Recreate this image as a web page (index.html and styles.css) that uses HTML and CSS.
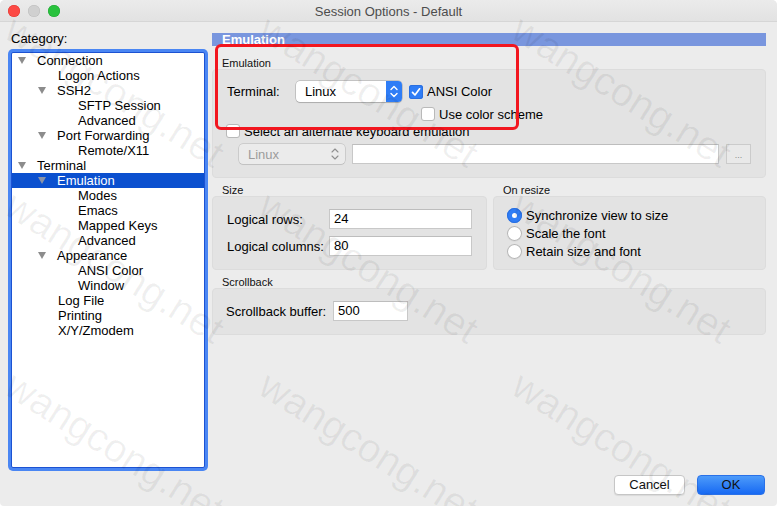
FILE: index.html
```html
<!DOCTYPE html>
<html lang="en">
<head>
<meta charset="utf-8">
<title>Session Options - Default</title>
<link rel="stylesheet" href="styles.css">
</head>
<body>
<div class="window">
  <header class="titlebar">
    <div class="lights">
      <span class="light red"></span>
      <span class="light gray"></span>
      <span class="light green"></span>
    </div>
    <div class="title">Session Options - Default</div>
    <div></div>
  </header>

  <div class="content">
    <aside class="sidebar">
      <div class="cat-label">Category:</div>
      <ul class="tree">
        <li class="l0"><span class="caret"></span>Connection</li>
        <li class="l1">Logon Actions</li>
        <li class="l1"><span class="caret"></span>SSH2</li>
        <li class="l2">SFTP Session</li>
        <li class="l2">Advanced</li>
        <li class="l1"><span class="caret"></span>Port Forwarding</li>
        <li class="l2">Remote/X11</li>
        <li class="l0"><span class="caret"></span>Terminal</li>
        <li class="l1 selected"><span class="caret"></span>Emulation</li>
        <li class="l2">Modes</li>
        <li class="l2">Emacs</li>
        <li class="l2">Mapped Keys</li>
        <li class="l2">Advanced</li>
        <li class="l1"><span class="caret"></span>Appearance</li>
        <li class="l2">ANSI Color</li>
        <li class="l2">Window</li>
        <li class="l1">Log File</li>
        <li class="l1">Printing</li>
        <li class="l1">X/Y/Zmodem</li>
      </ul>
    </aside>

    <main class="panel">
      <div class="panel-head">Emulation</div>

      <div class="group-label first">Emulation</div>
      <div class="group-box emu">
        <div class="row term-row">
          <span class="field-label term-label">Terminal:</span>
          <div class="select">
            <span class="select-text">Linux</span>
            <span class="stepper">
              <svg width="16" height="21" viewBox="0 0 16 21"><path d="M5 8.5 L8 5.5 L11 8.5 M5 12.5 L8 15.5 L11 12.5" fill="none" stroke="#fff" stroke-width="1.4" stroke-linecap="round" stroke-linejoin="round"/></svg>
            </span>
          </div>
          <span class="check on"><svg width="14" height="14" viewBox="0 0 14 14"><path d="M3.5 7.3 L6 10 L10.6 3.8" fill="none" stroke="#fff" stroke-width="1.7" stroke-linecap="round" stroke-linejoin="round"/></svg></span>
          <span class="check-text">ANSI Color</span>
        </div>
        <div class="row scheme-row">
          <span class="check"></span>
          <span class="check-text">Use color scheme</span>
        </div>
        <div class="row alt-row">
          <span class="check"></span>
          <span class="check-text">Select an alternate keyboard emulation</span>
        </div>
        <div class="row keymap-row">
          <div class="select disabled">
            <span class="select-text">Linux</span>
            <span class="stepper">
              <svg width="16" height="20" viewBox="0 0 16 20"><path d="M5 8 L8 5 L11 8 M5 12 L8 15 L11 12" fill="none" stroke="#8f8f8f" stroke-width="1.1" stroke-linecap="round" stroke-linejoin="round"/></svg>
            </span>
          </div>
          <div class="input wide"></div>
          <div class="browse">...</div>
        </div>
      </div>

      <div class="pair">
        <section class="half">
          <div class="group-label">Size</div>
          <div class="group-box size-box">
            <div class="row field-row">
              <span class="field-label size-label">Logical rows:</span>
              <div class="input size-input">24</div>
            </div>
            <div class="row field-row">
              <span class="field-label size-label">Logical columns:</span>
              <div class="input size-input">80</div>
            </div>
          </div>
        </section>
        <section class="half">
          <div class="group-label">On resize</div>
          <div class="group-box resize-box">
            <div class="row radio-row"><span class="radio on"></span>Synchronize view to size</div>
            <div class="row radio-row"><span class="radio"></span>Scale the font</div>
            <div class="row radio-row"><span class="radio"></span>Retain size and font</div>
          </div>
        </section>
      </div>

      <div class="group-label">Scrollback</div>
      <div class="group-box scroll-box">
        <div class="row field-row">
          <span class="field-label scroll-label">Scrollback buffer:</span>
          <div class="input scroll-input">500</div>
        </div>
      </div>
    </main>
  </div>

  <footer class="footer">
    <button class="btn cancel">Cancel</button>
    <button class="btn ok">OK</button>
  </footer>

  <div class="callout"></div>

  <div class="watermarks">
    <span class="wm c1 r1">wangcong.net</span>
    <span class="wm c2 r1">wangcong.net</span>
    <span class="wm c3 r1">wangcong.net</span>
    <span class="wm c1 r2">wangcong.net</span>
    <span class="wm c2 r2">wangcong.net</span>
    <span class="wm c3 r2">wangcong.net</span>
    <span class="wm c1 r3">wangcong.net</span>
    <span class="wm c2 r3">wangcong.net</span>
    <span class="wm c3 r3">wangcong.net</span>
  </div>
</div>
</body>
</html>
```

FILE: styles.css
```css
* { box-sizing: border-box; }

html, body {
  margin: 0;
  padding: 0;
}

body {
  width: 777px;
  height: 506px;
  background: #ffffff;
  font-family: "Liberation Sans", Arial, Helvetica, sans-serif;
  font-size: 13px;
  color: #000;
  overflow: hidden;
}

.window {
  position: relative;
  width: 777px;
  height: 506px;
  background: #ececec;
  border-radius: 5px 5px 4px 4px;
  display: flex;
  flex-direction: column;
  overflow: hidden;
}

/* ---- title bar ---- */
.titlebar {
  height: 22px;
  flex: none;
  display: grid;
  grid-template-columns: 1fr auto 1fr;
  align-items: center;
  background: linear-gradient(#ebebeb, #e2e2e2);
  border-bottom: 1px solid #d6d6d6;
}

.lights {
  display: flex;
  gap: 8px;
  padding-left: 8px;
  padding-top: 1px;
}

.light {
  width: 12px;
  height: 12px;
  border-radius: 50%;
}

.light.red { background: #fc4a45; box-shadow: inset 0 0 0 0.5px #e0352f; }
.light.gray { background: #d0d0d0; box-shadow: inset 0 0 0 0.5px #bcbcbc; }
.light.green { background: #29c23e; box-shadow: inset 0 0 0 0.5px #1fa531; }

.title {
  font-size: 13px;
  color: #4d4d4d;
  padding-top: 1px;
}

/* ---- main area ---- */
.content {
  flex: 1;
  display: flex;
  gap: 7px;
  padding: 9px 11px 0 11px;
  min-height: 0;
}

.sidebar {
  width: 194px;
  flex: none;
}

.cat-label {
  line-height: 16px;
  height: 16px;
}

.tree {
  list-style: none;
  margin: 5px 0 0;
  padding: 0;
  height: 416px;
  background: #fff;
  border: 1px solid #1c52d2;
  border-radius: 2px;
  box-shadow: 0 0 0 3px #4a86f3;
}

.tree li {
  height: 15px;
  line-height: 15px;
  display: flex;
  align-items: center;
  white-space: nowrap;
}

.tree .l0 { padding-left: 26px; }
.tree .l1 { padding-left: 46px; }
.tree .l2 { padding-left: 66px; }

.caret {
  width: 0;
  height: 0;
  margin-left: -20px;
  margin-right: 11px;
  border-left: 4.5px solid transparent;
  border-right: 4.5px solid transparent;
  border-top: 7px solid #8c8c8c;
}

.tree li.selected {
  background: #0b50cf;
  color: #fff;
}

.tree li.selected .caret { border-top-color: #8a93a8; }

/* ---- right panel ---- */
.panel {
  flex: 1;
  margin-top: 2px;
}

.panel-head {
  height: 13px;
  line-height: 13px;
  background: #7996de;
  color: #fff;
  font-weight: bold;
  padding-left: 10px;
}

.group-label {
  font-size: 11px;
  line-height: 12px;
  height: 12px;
  margin-top: 6px;
  padding-left: 10px;
  color: #111;
}

.group-label.first { margin-top: 11px; }

.group-box {
  background: #e3e3e3;
  border: 1px solid #dcdcdc;
  border-radius: 4px;
  padding: 0 14px 0 13px;
}

.row {
  display: flex;
  align-items: center;
}

.field-label { flex: none; }

/* emulation group */
.emu {
  height: 109px;
  padding-top: 11px;
}

.term-row { height: 21px; }
.term-label { width: 70px; padding-left: 1px; }

.scheme-row {
  height: 18px;
  margin-top: 3px;
  padding-left: 195px;
}

.alt-row { height: 16px; }

.keymap-row {
  height: 20px;
  margin-top: 5px;
  padding-left: 13px;
  gap: 7px;
}

.select {
  position: relative;
  width: 106px;
  height: 21px;
  flex: none;
  margin-right: 7px;
  background: #fff;
  border-radius: 4px;
  box-shadow: 0 0 0 0.5px rgba(0, 0, 0, 0.28), 0 1px 1px rgba(0, 0, 0, 0.12);
  display: flex;
  align-items: center;
}

.select-text {
  flex: 1;
  padding-left: 9px;
}

.stepper {
  width: 16px;
  height: 100%;
  background: #2f7df6;
  border-radius: 0 4px 4px 0;
  display: flex;
}

.select.disabled {
  height: 20px;
  margin-right: 0;
  background: #ebebeb;
  box-shadow: 0 0 0 0.5px rgba(0, 0, 0, 0.2), 0 1px 1px rgba(0, 0, 0, 0.06);
  color: #9c9c9c;
}

.select.disabled .stepper {
  background: transparent;
  margin-right: 2px;
}

.check {
  width: 14px;
  height: 14px;
  flex: none;
  border-radius: 3px;
  background: #fff;
  box-shadow: inset 0 0 0 1px #b9b9b9;
  margin-right: 4px;
  display: flex;
}

.check.on {
  background: #2f7df6;
  box-shadow: inset 0 0 0 1px #2a6fe0;
}

.input {
  height: 20px;
  background: #fff;
  border: 1px solid #c8c8c8;
  border-top-color: #bdbdbd;
  line-height: 18px;
  padding-left: 4px;
}

.input.wide { flex: 1; }

.browse {
  width: 25px;
  height: 20px;
  flex: none;
  background: #e9e9e9;
  border: 1px solid #cbcbcb;
  color: #8a8a8a;
  font-size: 9px;
  text-align: center;
  line-height: 20px;
}

/* size / on resize */
.pair {
  display: flex;
  gap: 6px;
}

.half { flex: 1; }

.size-box {
  height: 74px;
  padding-top: 12px;
}

.field-row { height: 20px; }
.field-row + .field-row { margin-top: 7px; }

.size-label { width: 103px; padding-left: 1px; }
.size-input { width: 143px; }

.resize-box {
  height: 74px;
  padding-top: 9px;
}

.radio-row { height: 18px; }

.radio {
  width: 15px;
  height: 15px;
  flex: none;
  margin-right: 4px;
  border-radius: 50%;
  background: #fff;
  box-shadow: inset 0 0 0 1px #b6b6b6, 0 0.5px 1px rgba(0, 0, 0, 0.08);
  display: flex;
  align-items: center;
  justify-content: center;
}

.radio.on {
  background: #2f7df6;
  box-shadow: inset 0 0 0 1px #2a6fe0;
}

.radio.on::after {
  content: "";
  width: 5px;
  height: 5px;
  border-radius: 50%;
  background: #fff;
}

/* scrollback */
.scroll-box {
  height: 47px;
  padding-top: 12px;
}

.scroll-label { width: 107px; }
.scroll-input { width: 75px; }

/* ---- footer buttons ---- */
.footer {
  flex: none;
  display: flex;
  justify-content: flex-end;
  gap: 12px;
  padding: 0 12px 11px 0;
}

.btn {
  height: 20px;
  font-family: inherit;
  font-size: 13px;
  color: #111;
  border-radius: 4px;
  padding: 0;
  line-height: 18px;
}

.btn.cancel {
  width: 71px;
  background: #fff;
  border: 1px solid #c6c6c6;
  box-shadow: 0 1px 1px rgba(0, 0, 0, 0.08);
}

.btn.ok {
  width: 68px;
  background: linear-gradient(#4d9bfa, #1769f3);
  border: 1px solid #2a71e8;
}

/* ---- red highlight frame ---- */
.callout {
  position: absolute;
  left: 215px;
  top: 44px;
  width: 304px;
  height: 86px;
  border: 3px solid #f2161f;
  border-radius: 6px;
  pointer-events: none;
}

/* ---- site watermark ---- */
.watermarks {
  position: absolute;
  inset: 0;
  pointer-events: none;
  overflow: hidden;
}

.wm {
  position: absolute;
  font-family: "Liberation Sans", Arial, sans-serif;
  font-size: 40px;
  line-height: 1;
  color: rgba(0, 0, 0, 0.06);
  white-space: nowrap;
  transform-origin: 0 0;
  transform: rotate(32deg);
}

.c1 { left: 20px; }
.c2 { left: 274px; }
.c3 { left: 527px; }
.r1 { top: 8px; }
.r2 { top: 184px; }
.r3 { top: 364px; }
```
